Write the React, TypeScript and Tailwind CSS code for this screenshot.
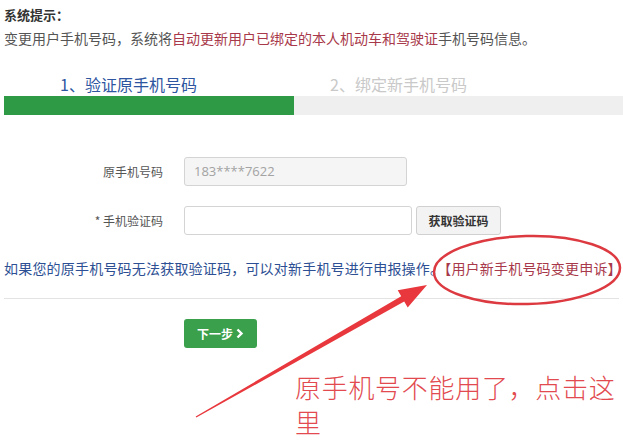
import React from "react";

export default function App() {
  return (
    <div className="relative w-[623px] h-[447px] bg-white overflow-hidden font-['Noto_Sans_CJK_SC','Microsoft_YaHei',sans-serif] text-[#555]">
      <div className="pt-[5px]">
        <div className="pl-1 text-[13px] leading-[20px] font-bold text-[#333]">系统提示：</div>
        <div className="mt-[3px] pl-1 text-[14px] leading-[20px] whitespace-nowrap">
          变更用户手机号码，系统将<span className="text-[#a8394a]">自动更新用户已绑定的本人机动车和驾驶证</span>手机号码信息。
        </div>

        <div className="mt-[24px] flex h-[24px] items-center text-[16px] leading-[24px]">
          <div className="ml-[60px] w-[270px] text-[#2e55a0]">1、验证原手机号码</div>
          <div className="text-[#c9c9c9]">2、绑定新手机号码</div>
        </div>
        <div className="ml-1 h-[19px] bg-[#efefef] flex">
          <div className="w-[290px] h-full bg-[#2f9a45]" />
        </div>

        <div className="mt-[42px] flex items-center">
          <div className="w-[163px] text-right text-[12px] text-[#555]">原手机号码</div>
          <div className="ml-[21px] w-[223px] h-[29px] rounded-[3px] border border-[#d4d4d4] bg-[#f5f5f5] flex items-center pl-[9px] text-[13px] text-[#a3a3a3] font-['Open_Sans',sans-serif]">
            183****7622
          </div>
        </div>
        <div className="mt-[20px] flex items-center">
          <div className="w-[163px] text-right text-[12px] text-[#555]">* 手机验证码</div>
          <div className="ml-[21px] w-[228px] h-[29px] rounded-[3px] border border-[#d4d4d4] bg-white" />
          <div className="ml-[4px] w-[85px] h-[29px] rounded-[3px] border border-[#d0d0d0] bg-[#f3f3f3] flex items-center justify-center text-[12px] font-bold text-[#333]">
            获取验证码
          </div>
        </div>

        <div className="mt-[23px] pl-1 text-[14px] leading-[20px] tracking-[0.2px] whitespace-nowrap text-[#2d4f93]">
          如果您的原手机号码无法获取验证码，可以对新手机号进行申报操作。<span className="text-[#a8394a]">【用户新手机号码变更申诉】</span>
        </div>

        <div className="mt-[20px] mx-1 border-t border-[#e3e3e3]" />

        <div className="mt-[20px] ml-[184px] w-[73px] h-[29px] rounded-[3px] bg-[#3aa04b] flex items-center justify-center gap-[3px] text-[12px] font-bold text-white">
          <span>下一步</span>
          <svg width="8" height="11" viewBox="0 0 8 11">
            <path d="M1.5 1.5 L5.5 5.5 L1.5 9.5" stroke="white" strokeWidth="2.4" fill="none" />
          </svg>
        </div>
      </div>

      <svg className="absolute left-0 top-0" width="623" height="447" viewBox="0 0 623 447">
        <ellipse cx="527" cy="270" rx="93" ry="34" fill="none" stroke="#dc3a40" strokeWidth="2.5" transform="rotate(-1.5 527 270)" />
        <polygon
          points="195.7,416.4 401.2,296.3 397.7,290.2 427,285 407.7,307.6 404.2,301.5 196.3,417.6"
          fill="#e8383d"
        />
      </svg>

      <div className="absolute left-[295px] top-[369px] w-[328px] text-[26px] leading-[35px] tracking-[0.7px] text-[#e24a4f] font-['Noto_Sans_CJK_SC',sans-serif] font-light">
        原手机号不能用了，点击这里
      </div>
    </div>
  );
}
